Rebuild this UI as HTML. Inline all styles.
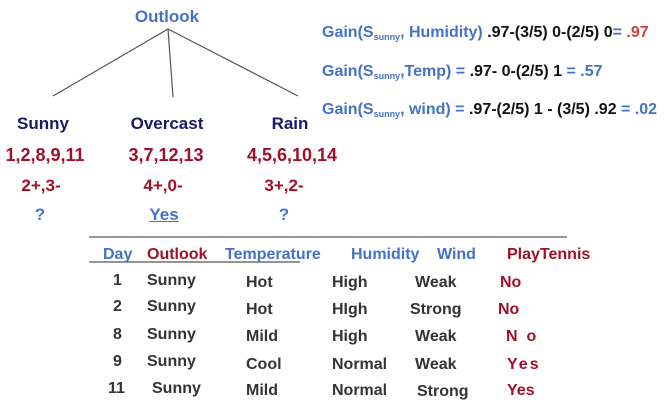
<!DOCTYPE html>
<html><head><meta charset="utf-8"><style>
body{margin:0;width:672px;height:407px;background:#fff;position:relative;overflow:hidden;font-family:"Liberation Sans",sans-serif;font-weight:bold}
.t{position:absolute;white-space:nowrap;line-height:1}
.b{color:#4472c4}.n{color:#1a1a66}.r{color:#a0102a}.k{color:#333}
.c{transform:translateX(-50%)}
.g{font-size:16px}
.g sub{font-size:9px;vertical-align:-3px}
.u{text-decoration:underline}
.d{font-size:16px;color:#333}
.h{font-size:16px}
</style></head><body>
<svg width="672" height="407" style="position:absolute;left:0;top:0">
<g stroke="#555" stroke-width="1.2">
<line x1="168" y1="29" x2="53" y2="96"/><line x1="168" y1="29" x2="173" y2="97"/><line x1="168" y1="29" x2="298" y2="96"/>
<line x1="89" y1="237" x2="567" y2="237"/>
<line x1="89" y1="262" x2="300" y2="262"/>
</g></svg>
<div class="t b c" style="left:167px;top:8px;font-size:17px">Outlook</div>
<div class="t n c" style="left:43px;top:115px;font-size:17px">Sunny</div>
<div class="t n c" style="left:167px;top:115px;font-size:17px">Overcast</div>
<div class="t n c" style="left:290px;top:115px;font-size:17px">Rain</div>
<div class="t r c" style="left:45px;top:146px;font-size:18px">1,2,8,9,11</div>
<div class="t r c" style="left:166px;top:146px;font-size:18px">3,7,12,13</div>
<div class="t r c" style="left:292px;top:146px;font-size:18px">4,5,6,10,14</div>
<div class="t r c" style="left:41px;top:177px;font-size:17px">2+,3-</div>
<div class="t r c" style="left:163px;top:177px;font-size:17px">4+,0-</div>
<div class="t r c" style="left:284px;top:177px;font-size:17px">3+,2-</div>
<div class="t b c" style="left:40px;top:206px;font-size:17px">?</div>
<div class="t b c u" style="left:164px;top:206px;font-size:17px">Yes</div>
<div class="t b c" style="left:284px;top:206px;font-size:17px">?</div>

<div class="t g" style="left:322px;top:25px"><span class="b">Gain(S<sub>sunny</sub>, Humidity)</span> <span style="color:#111">.97-(3/5) 0-(2/5) 0</span><span class="b">= </span><span style="color:#d0403a">.97</span></div>
<div class="t g" style="left:322px;top:64px"><span class="b">Gain(S<sub>sunny</sub>,Temp) = </span><span style="color:#111">.97- 0-(2/5) 1</span><span class="b"> = .57</span></div>
<div class="t g" style="left:322px;top:102px"><span class="b">Gain(S<sub>sunny</sub>, wind) = </span><span style="color:#111">.97-(2/5) 1 - (3/5) .92</span><span class="b"> = .02</span></div>

<div class="t h b" style="left:103px;top:247px">Day</div>
<div class="t h r" style="left:147px;top:247px">Outlook</div>
<div class="t h b" style="left:225px;top:247px">Temperature</div>
<div class="t h b" style="left:351px;top:247px">Humidity</div>
<div class="t h b" style="left:437px;top:247px">Wind</div>
<div class="t h r" style="left:507px;top:247px">PlayTennis</div>

<div class="t d" style="left:113px;top:273px">1</div><div class="t d" style="left:147px;top:273px">Sunny</div><div class="t d" style="left:246px;top:275px">Hot</div><div class="t d" style="left:332px;top:275px">High</div><div class="t d" style="left:415px;top:275px">Weak</div><div class="t h r" style="left:500px;top:275px">No</div>
<div class="t d" style="left:113px;top:299px">2</div><div class="t d" style="left:147px;top:299px">Sunny</div><div class="t d" style="left:246px;top:302px">Hot</div><div class="t d" style="left:332px;top:302px">HIgh</div><div class="t d" style="left:410px;top:302px">Strong</div><div class="t h r" style="left:498px;top:302px">No</div>
<div class="t d" style="left:113px;top:327px">8</div><div class="t d" style="left:147px;top:327px">Sunny</div><div class="t d" style="left:246px;top:329px">Mild</div><div class="t d" style="left:332px;top:329px">High</div><div class="t d" style="left:415px;top:329px">Weak</div><div class="t h r" style="left:506px;top:329px">N&nbsp;&nbsp;o</div>
<div class="t d" style="left:113px;top:354px">9</div><div class="t d" style="left:147px;top:354px">Sunny</div><div class="t d" style="left:246px;top:357px">Cool</div><div class="t d" style="left:332px;top:357px">Normal</div><div class="t d" style="left:415px;top:357px">Weak</div><div class="t h r" style="left:507px;top:357px;letter-spacing:2px">Yes</div>
<div class="t d" style="left:108px;top:381px">11</div><div class="t d" style="left:152px;top:381px">Sunny</div><div class="t d" style="left:246px;top:383px">Mild</div><div class="t d" style="left:332px;top:383px">Normal</div><div class="t d" style="left:417px;top:384px">Strong</div><div class="t h r" style="left:507px;top:383px">Yes</div>
</body></html>
